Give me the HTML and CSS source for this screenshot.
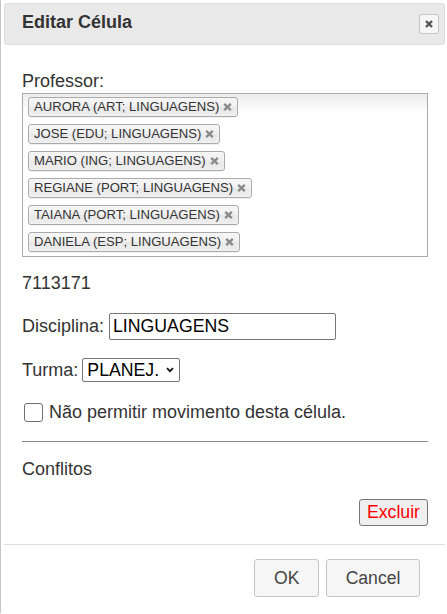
FILE: index.html
```html
<!DOCTYPE html>
<html lang="pt">
<head>
<meta charset="utf-8">
<title>Editar Célula</title>
<link rel="stylesheet" href="styles.css">
</head>
<body>
<div class="dialog">
  <div class="titlebar">
    <span class="title">Editar Célula</span>
    <button class="close" type="button" title="Close">
      <svg width="8" height="8" viewBox="0 0 8 8"><path d="M1 1L7 7M7 1L1 7" stroke="#555" stroke-width="2.4"/></svg>
    </button>
  </div>
  <div class="content">
    <div class="label-line">Professor:</div>
    <ul class="chips">
      <li class="chip"><span>AURORA (ART; LINGUAGENS)</span><svg class="chip-x" width="9" height="8" viewBox="0 0 9 8"><path d="M1.2 0.8L7.8 7.2M7.8 0.8L1.2 7.2" stroke="#8a8a8a" stroke-width="2.3"/></svg></li>
      <li class="chip"><span>JOSE (EDU; LINGUAGENS)</span><svg class="chip-x" width="9" height="8" viewBox="0 0 9 8"><path d="M1.2 0.8L7.8 7.2M7.8 0.8L1.2 7.2" stroke="#8a8a8a" stroke-width="2.3"/></svg></li>
      <li class="chip"><span>MARIO (ING; LINGUAGENS)</span><svg class="chip-x" width="9" height="8" viewBox="0 0 9 8"><path d="M1.2 0.8L7.8 7.2M7.8 0.8L1.2 7.2" stroke="#8a8a8a" stroke-width="2.3"/></svg></li>
      <li class="chip"><span>REGIANE (PORT; LINGUAGENS)</span><svg class="chip-x" width="9" height="8" viewBox="0 0 9 8"><path d="M1.2 0.8L7.8 7.2M7.8 0.8L1.2 7.2" stroke="#8a8a8a" stroke-width="2.3"/></svg></li>
      <li class="chip"><span>TAIANA (PORT; LINGUAGENS)</span><svg class="chip-x" width="9" height="8" viewBox="0 0 9 8"><path d="M1.2 0.8L7.8 7.2M7.8 0.8L1.2 7.2" stroke="#8a8a8a" stroke-width="2.3"/></svg></li>
      <li class="chip"><span>DANIELA (ESP; LINGUAGENS)</span><svg class="chip-x" width="9" height="8" viewBox="0 0 9 8"><path d="M1.2 0.8L7.8 7.2M7.8 0.8L1.2 7.2" stroke="#8a8a8a" stroke-width="2.3"/></svg></li>
    </ul>
    <div class="code">7113171</div>
    <div class="field-row disciplina">
      <label class="field-label" for="disc">Disciplina:</label>
      <input id="disc" class="text-input" type="text" value="LINGUAGENS">
    </div>
    <div class="field-row turma">
      <span class="field-label">Turma:</span>
      <div class="select">
        <span>PLANEJ.</span>
        <svg width="8" height="6" viewBox="0 0 8 6"><path d="M1 1.2L4 4.2L7 1.2" fill="none" stroke="#111" stroke-width="1.8"/></svg>
      </div>
    </div>
    <div class="check-row">
      <span class="checkbox"></span>
      <span>Não permitir movimento desta célula.</span>
    </div>
    <hr class="divider">
    <div class="conflitos">Conflitos</div>
    <div class="actions"><button class="btn-excluir" type="button">Excluir</button></div>
  </div>
  <div class="buttonpane">
    <button class="btn" type="button">OK</button>
    <button class="btn" type="button">Cancel</button>
  </div>
</div>
</body>
</html>
```
FILE: styles.css
```css
html, body {
  margin: 0;
  padding: 0;
  overflow: hidden;
  background: #fff;
}

body {
  font-family: "Liberation Sans", Arial, sans-serif;
  font-size: 18px;
  line-height: 21px;
  color: #333;
}

.dialog {
  width: 441px;
  padding: 3px 3px 8px 3px;
  border-left: 1px solid #c5c5c5;
  border-right: 1px solid #c5c5c5;
  background: #fff;
}

.titlebar {
  display: flex;
  justify-content: space-between;
  align-items: flex-start;
  padding: 8px 5px 10px 17px;
  background: #e9e9e9;
  border: 1px solid #dddddd;
  border-radius: 3px;
}

.title {
  font-weight: bold;
  font-size: 18px;
  line-height: 21px;
  color: #333;
}

.close {
  width: 20px;
  height: 20px;
  margin-top: 2px;
  padding: 0;
  display: flex;
  align-items: center;
  justify-content: center;
  background: #f6f6f6;
  border: 1px solid #c5c5c5;
  border-radius: 3px;
}

.content {
  padding: 26px 17px 18px 18px;
}

.label-line {
  height: 21px;
}

.chips {
  list-style: none;
  margin: 1px 0 0;
  padding: 3px 5px 4px;
  display: flex;
  flex-direction: column;
  align-items: flex-start;
  gap: 7px;
  border: 1px solid #aaa;
  background: linear-gradient(to bottom, #eee 1%, #fff 12%);
}

.chip {
  display: flex;
  align-items: center;
  height: 18px;
  padding: 0 5px 0 5px;
  font-size: 13.1px;
  line-height: 18px;
  color: #333;
  border: 1px solid #aaa;
  border-radius: 3px;
  background: linear-gradient(to bottom, #f4f4f4 20%, #f0f0f0 50%, #e8e8e8 52%, #eeeeee 100%);
  box-shadow: 0 0 2px #fff inset, 0 1px 0 rgba(0,0,0,0.05);
}

.chip-x {
  margin-left: 4px;
  display: block;
}

.code {
  margin-top: 16px;
}

.field-row {
  display: flex;
  align-items: center;
}

.disciplina {
  margin-top: 19px;
  gap: 5px;
}

.turma {
  margin-top: 18px;
  gap: 4px;
}

.text-input {
  box-sizing: border-box;
  width: 227px;
  height: 27px;
  margin: 0;
  padding: 0 3px;
  font-family: "Liberation Sans", Arial, sans-serif;
  font-size: 17.7px;
  color: #000;
  border: 1px solid #767676;
  border-radius: 2px;
  background: #fff;
}

.select {
  box-sizing: border-box;
  width: 98px;
  height: 24px;
  display: flex;
  align-items: center;
  justify-content: space-between;
  padding: 0 5px 0 4px;
  font-size: 17.7px;
  color: #000;
  border: 1px solid #767676;
  border-radius: 2px;
  background: #fff;
}

.select svg {
  display: block;
}

.check-row {
  margin-top: 20px;
  display: flex;
  align-items: center;
  gap: 6px;
}

.checkbox {
  box-sizing: border-box;
  width: 19px;
  height: 19px;
  margin-left: 2px;
  border: 1px solid #6f6f6f;
  border-radius: 3px;
  background: #fff;
}

.divider {
  margin: 18px 0 0;
  border: 0;
  border-top: 1px solid #8c8c8c;
  height: 0;
}

.conflitos {
  margin-top: 17px;
}

.actions {
  margin-top: 19px;
  display: flex;
  justify-content: flex-end;
}

.btn-excluir {
  box-sizing: border-box;
  height: 27px;
  padding: 0 7px;
  font-family: "Liberation Sans", Arial, sans-serif;
  font-size: 17.7px;
  color: #ff0000;
  background: #efefef;
  border: 1px solid #767676;
  border-radius: 3px;
}

.buttonpane {
  display: flex;
  justify-content: flex-end;
  gap: 7px;
  padding: 14px 25px 8px;
  border-top: 1px solid #dddddd;
}

.btn {
  box-sizing: border-box;
  height: 38px;
  padding: 0 18.6px;
  font-family: "Liberation Sans", Arial, sans-serif;
  font-size: 17.6px;
  color: #454545;
  background: #f6f6f6;
  border: 1px solid #c5c5c5;
  border-radius: 3px;
}
```
